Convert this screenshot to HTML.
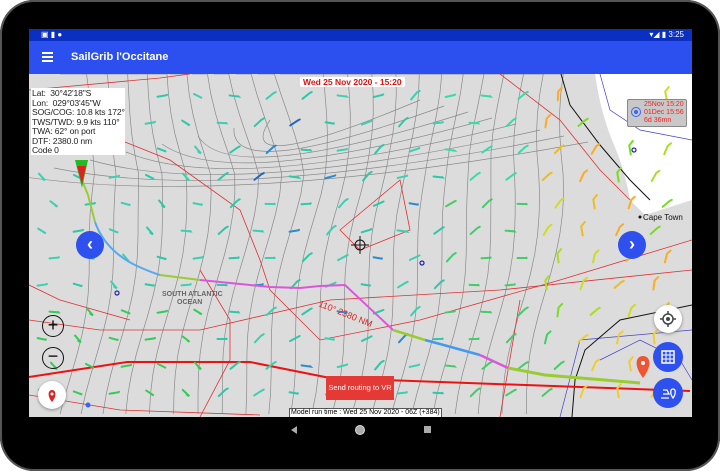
<!DOCTYPE html>
<html><head><meta charset="utf-8"><style>
html,body{margin:0;padding:0;width:720px;height:471px;overflow:hidden;background:#fff;font-family:"Liberation Sans",sans-serif}
#dev{position:absolute;left:0;top:0;width:720px;height:471px;background:#000;border-radius:34px;box-shadow:inset 0 0 0 2px #555}
#scr{position:absolute;left:29px;top:29px;width:663px;height:388px;background:#dcdcdc;overflow:hidden}
#sb{position:absolute;left:0;top:0;width:663px;height:12px;background:#0b2fc0;color:#fff;font-size:8px}
#ab{position:absolute;left:0;top:12px;width:663px;height:33px;background:#2c4ff0;color:#fff}
.abs{position:absolute;white-space:nowrap}
</style></head><body>
<div id="dev"></div>
<div id="scr">
<svg id="map" class="abs" style="left:0;top:45px" width="663" height="343" viewBox="29 74 663 343">
<path d="M595 74 Q600 110 612 140 Q625 170 630 200 L645 215 L692 200 L692 74Z" fill="#fff"/>
<g id="cont" fill="none" stroke="#8a8a8a" stroke-width="0.7"></g>
<g fill="none" stroke="#d33" stroke-width="0.8">
<path d="M29 90 L160 78 L190 74"/>
<path d="M95 130 L170 160 L240 210 L260 260 L270 290 L320 340 L420 320 L560 280 L692 240"/>
<path d="M500 74 L560 120 L600 170 L630 200"/>
<path d="M400 180 L340 230 L360 250 L410 230 Z"/>
<path d="M29 320 L100 330 L200 330 L330 300 L500 290 L692 270"/>
<path d="M29 395 L120 410 L260 415"/>
<path d="M29 285 L60 300 L130 320"/>
<path d="M520 300 L500 417"/>
<path d="M200 270 L230 320 L230 360 L200 417"/>
</g>
<g fill="none" stroke="#44c" stroke-width="0.7"><path d="M600 74 L610 110 L640 130 L692 140"/><path d="M600 360 L640 340 L680 360 L692 380"/><path d="M560 417 L580 340 L692 330"/></g>
<path d="M561 74 L570 105 L600 145 L630 180 L650 200" fill="none" stroke="#111" stroke-width="1"/>
<path d="M692 305 L620 320 L585 350 L575 380 L572 417" fill="none" stroke="#111" stroke-width="1"/>
<path d="M29 377 L127 362 L250 362 L330 378 L690 391" fill="none" stroke="#e11" stroke-width="2"/>
<g id="barbs" fill="none" stroke-width="2" stroke-linecap="round"></g>
<path d="M82 180 L88 195 L95 222" stroke="#9c3" stroke-width="2" fill="none"/>
<path d="M95 222 Q105 250 135 265 Q150 272 160 275" stroke="#5ae" stroke-width="2" fill="none"/>
<path d="M160 275 L200 280" stroke="#9c3" stroke-width="2" fill="none"/>
<path d="M200 280 L270 287 L300 288 L320 286 L345 285 L393 330" stroke="#d5d" stroke-width="2" fill="none"/>
<path d="M393 330 L425 340" stroke="#9c3" stroke-width="2.5" fill="none"/>
<path d="M425 340 L440 344 L480 355" stroke="#49e" stroke-width="2.5" fill="none"/>
<path d="M480 355 L508 368" stroke="#d5d" stroke-width="2.5" fill="none"/>
<path d="M508 368 L545 375 L640 383" stroke="#9c3" stroke-width="3" fill="none"/>
<text x="318" y="306" fill="#d22" font-size="9" transform="rotate(22 318 306)">110° 2380 NM</text>
<text x="162" y="296" fill="#666" font-size="7" font-weight="bold">SOUTH ATLANTIC</text>
<text x="177" y="304" fill="#666" font-size="7" font-weight="bold">OCEAN</text>
<path d="M75 160 L88 160 L82 188 Z" fill="#2b2"/><path d="M77 166 L86 166 L82 184 Z" fill="#d22"/>
<circle cx="360" cy="245" r="5" fill="none" stroke="#111"/><path d="M351 245 h18 M360 236 v18" stroke="#111"/>
<circle cx="422" cy="263" r="2" fill="none" stroke="#22a" stroke-width="1.2"/>
<circle cx="117" cy="293" r="2" fill="none" stroke="#22a" stroke-width="1.2"/>
<circle cx="634" cy="150" r="2" fill="none" stroke="#22a" stroke-width="1.2"/>
<circle cx="88" cy="405" r="2.5" fill="#36f"/>
<circle cx="640" cy="217" r="1.5" fill="#111"/>
<text x="643" y="220" font-size="8" fill="#111">Cape Town</text>
<path d="M643 378 C633 365 636 356 643 356 C650 356 653 365 643 378Z" fill="#e53"/>
<circle cx="643" cy="363" r="2" fill="#fff"/>
</svg>
<div id="sb"><span class="abs" style="left:12px;top:1px">▣ ▮ ●</span><span class="abs" style="right:8px;top:1px">▾◢ ▮ 3:25</span></div>
<div id="ab"><div class="abs" style="left:13px;top:11px;width:11px;height:2px;background:#fff;box-shadow:0 4px #fff,0 8px #fff"></div><div class="abs" style="left:42px;top:10px;font-size:11px;font-weight:bold">SailGrib l'Occitane</div></div>
<div class="abs" style="left:271px;top:48px;background:#fff;color:#d11;font-size:8.5px;font-weight:bold;padding:0 3px;border-radius:2px">Wed 25 Nov 2020 - 15:20</div>
<div class="abs" style="left:2px;top:59px;width:94px;height:67px;background:#fff;font-size:8.6px;letter-spacing:-0.15px;line-height:9.5px;color:#222;padding:1px 0 0 1px;box-sizing:border-box;overflow:hidden">Lat:&nbsp; 30°42'18"S<br>Lon:&nbsp; 029°03'45"W<br>SOG/COG: 10.8 kts 172°<br>TWS/TWD: 9.9 kts 110°<br>TWA: 62° on port<br>DTF: 2380.0 nm<br>Code 0</div>
<div class="abs" style="left:598px;top:70px;width:58px;height:26px;background:#c8c8c8;border:1px solid #888;border-radius:2px;font-size:7px;color:#e22;line-height:8px"><div class="abs" style="left:3px;top:7px;width:8px;height:8px;border:1.5px solid #36f;border-radius:50%"><div style="margin:2px;width:4px;height:4px;background:#36f;border-radius:50%"></div></div><div class="abs" style="left:16px;top:1px">25Nov 15:20<br>01Dec 15:56<br>6d 36mn</div></div>
<div class="abs" style="left:47px;top:202px;width:28px;height:28px;border-radius:50%;background:#2d50ee;color:#fff;font-size:18px;text-align:center;line-height:27px;font-weight:bold">‹</div>
<div class="abs" style="left:589px;top:202px;width:28px;height:28px;border-radius:50%;background:#2d50ee;color:#fff;font-size:18px;text-align:center;line-height:27px;font-weight:bold">›</div>
<div class="abs" style="left:13px;top:286px;width:20px;height:20px;border:1.5px solid #111;border-radius:50%;font-size:18px;line-height:19px;text-align:center">+</div>
<div class="abs" style="left:13px;top:318px;width:20px;height:20px;border:1.5px solid #111;border-radius:50%;font-size:18px;line-height:17px;text-align:center">−</div>
<div class="abs" style="left:9px;top:352px;width:28px;height:28px;border-radius:50%;background:#fff;box-shadow:0 1px 3px #888"><svg width="28" height="28"><path d="M14 21 C9 15 10 9 14 9 C18 9 19 15 14 21Z" fill="#d22"/><circle cx="14" cy="13" r="1.5" fill="#fff"/></svg></div>
<div class="abs" style="left:625px;top:276px;width:28px;height:28px;border-radius:50%;background:#fff;box-shadow:0 1px 3px #888"><svg width="28" height="28"><circle cx="14" cy="14" r="5" fill="none" stroke="#444" stroke-width="1.5"/><circle cx="14" cy="14" r="2" fill="#444"/><path d="M14 6v3M14 19v3M6 14h3M19 14h3" stroke="#444" stroke-width="1.5"/></svg></div>
<div class="abs" style="left:624px;top:313px;width:30px;height:30px;border-radius:50%;background:#2d50ee"><svg width="30" height="30"><rect x="9" y="9" width="12" height="12" fill="none" stroke="#fff" stroke-width="1.5"/><path d="M9 13h12M9 17h12M13 9v12M17 9v12" stroke="#fff"/></svg></div>
<div class="abs" style="left:624px;top:349px;width:30px;height:30px;border-radius:50%;background:#2d50ee"><svg width="30" height="30"><path d="M8 20h8 M10 12 h4 l2 4 h-6" stroke="#fff" fill="none" stroke-width="1.3"/><path d="M20 20 C17 16 17 11 20 11 C23 11 23 16 20 20Z" fill="none" stroke="#fff" stroke-width="1.3"/></svg></div>
<div class="abs" style="left:297px;top:347px;width:68px;height:24px;background:#e53935;color:#fff;font-size:7.5px;text-align:center;line-height:24px">Send routing to VR</div>
<div class="abs" style="left:260px;top:379px;background:#fff;border:1px solid #555;font-size:7px;padding:0 1px;line-height:8px">Model run time : Wed 25 Nov 2020 - 06Z (+384)</div>
</div>
<div class="abs" style="left:291px;top:426px;width:0;height:0;border-top:4px solid transparent;border-bottom:4px solid transparent;border-right:6px solid #aaa"></div>
<div class="abs" style="left:355px;top:425px;width:8px;height:8px;border-radius:50%;background:#aaa;border:1px solid #ddd"></div>
<div class="abs" style="left:424px;top:426px;width:7px;height:7px;background:#aaa"></div>
<script>
(function(){
var ns="http://www.w3.org/2000/svg",c=document.getElementById("cont"),b=document.getElementById("barbs");
for(var i=0;i<22;i++){var p=document.createElementNS(ns,"path");var x0=100+i*22,d="M"+(x0-40)+" 74";
for(var y=74;y<=417;y+=20){var off=Math.sin(y/40+i*0.4)*6-(y>180?(y-180)*0.15:0)+(y<170?(170-y)*0.2*(i<10?-1:0.3):0);d+=" L"+(x0+off)+" "+y;}
p.setAttribute("d",d);c.appendChild(p);}
for(var k=0;k<8;k++){var p=document.createElementNS(ns,"path");var r=30+k*12;p.setAttribute("d","M"+(360-r*3)+" "+(120+k*8)+" Q 230 "+(180+k*4)+" "+(360+r*2)+" "+(100+k*6));c.appendChild(p);}
var n=0;
function col(x,y){n++;if(x>540&&y<330)return["#7d2","#ad2","#cd2","#eb2","#fa2"][Math.floor((x+y)%5)];if(x>560&&y>330)return["#ec3","#fa2","#9c3"][Math.floor(x%3)];if(x>440)return y<200?"#3da":"#4c6";if(x<200&&y>300)return"#3c5";if(x>250&&x<420&&y>140&&y<380&&n%5==0)return"#2a8cd0";if(x>150&&x<320&&y<200&&n%6==0)return"#2566c0";return n%2?"#2dc8a8":"#3ad0b0";}
var row=0;
for(var y=96;y<410;y+=27){row++;for(var x=42;x<690;x+=36){var xx=x+(row%2?12:0),yy=y;if(xx<130&&yy<160)continue;if(xx>590&&yy<130&&xx<660)continue;
var co=col(xx,yy),a=(xx>540?-70:(xx<200?20:-20))+Math.sin(xx*0.05+yy*0.03)*30,rad=a*Math.PI/180;
var dx=Math.cos(rad)*4.5,dy=Math.sin(rad)*4.5;var p=document.createElementNS(ns,"path");
p.setAttribute("d","M"+(xx-dx)+" "+(yy-dy)+" L"+(xx+dx)+" "+(yy+dy)+" L"+(xx+dx-dy*0.8)+" "+(yy+dy+dx*0.8-4));
p.setAttribute("stroke",co);b.appendChild(p);}}
})();
</script>
</body></html>
